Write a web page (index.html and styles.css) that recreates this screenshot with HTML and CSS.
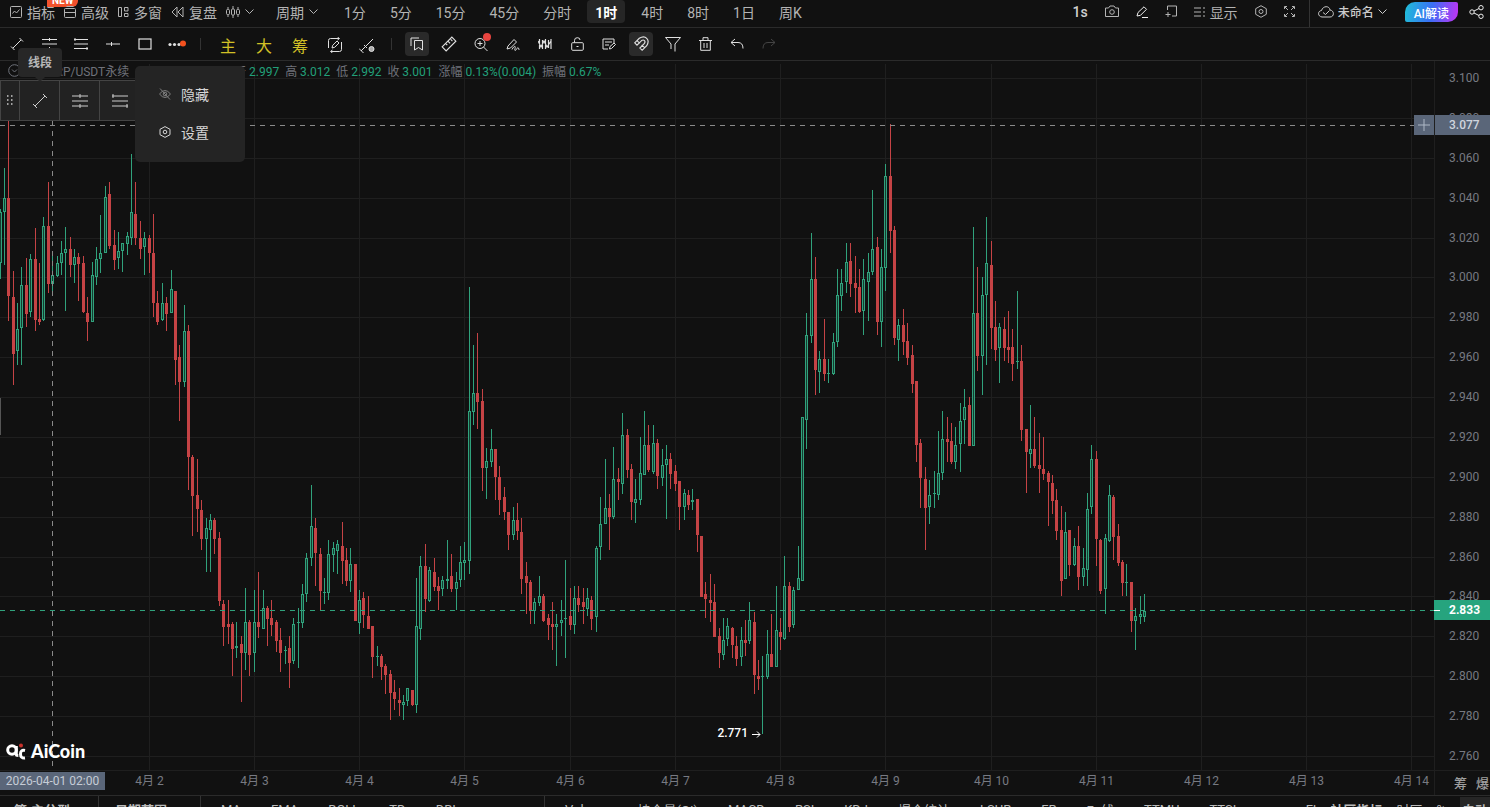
FILE: index.html
```
<!DOCTYPE html>
<html lang="zh-CN">
<head>
    <meta charset="UTF-8">
    <title>AiCoin - XRP/USDT永续</title>
    <meta name="viewport" content="width=device-width, initial-scale=1">
    <link rel="stylesheet" href="styles.css">
</head>
<body>
    <header class="topbar">
        <div class="tools">
            <button class="tool">
                <svg width="12" height="12" viewBox="0 0 12 12"><rect x=".5" y=".5" width="11" height="11" rx="1"/><path d="M2.5 7.5l2-2.500 2 2 3-3.500"/></svg>指标
                <span class="badge">NEW</span>
            </button>
            <button class="tool"><svg width="12" height="12" viewBox="0 0 12 12"><rect x=".5" y="2.500" width="11" height="9" rx="1"/><path d="M2.500 .5h7M.5 6.500h11"/></svg>高级</button>
            <button class="tool"><svg width="11" height="12" viewBox="0 0 11 12"><path d="M.5 1.500h3v9h-3zM6.500 1.500h3.500v3.500h-3.500zM6.500 7.500h3.500v3h-3.500z"/></svg>多窗</button>
            <button class="tool"><svg width="13" height="12" viewBox="0 0 13 12"><path d="M6 1v10L1 6zM12 1v10L7 6z"/></svg>复盘</button>
            <button class="tool" aria-label="K线类型">
                <svg width="14" height="14" viewBox="0 0 14 14"><path d="M2 2v10M7 1v12M12 2v10"/><rect x=".5" y="4.500" width="3" height="5" rx="1" fill="#111"/><rect x="5.500" y="4" width="3" height="6" rx="1" fill="#111"/><rect x="10.500" y="4.500" width="3" height="5" rx="1" fill="#111"/></svg>
                <svg width="9" height="6" viewBox="0 0 9 6"><path d="M.5 .5l4 4 4-4"/></svg>
            </button>
        </div>
        <nav class="periods">
            <button class="tool period-menu">周期<svg width="9" height="6" viewBox="0 0 9 6"><path d="M.5 .5l4 4 4-4"/></svg></button>
            <button>1分</button>
            <button>5分</button>
            <button>15分</button>
            <button>45分</button>
            <button>分时</button>
            <button class="active">1时</button>
            <button>4时</button>
            <button>8时</button>
            <button>1日</button>
            <button>周K</button>
        </nav>
        <div class="actions">
            <button class="speed">1s</button>
            <button aria-label="截图"><svg width="14" height="13" viewBox="0 0 14 13"><path d="M.5 3h3l1.500-2h4l1.500 2h3v8.500h-13z"/><circle cx="7" cy="7" r="2.300"/></svg></button>
            <button class="bright" aria-label="画笔"><svg width="12" height="12" viewBox="0 0 12 12"><path d="M1 10l1-3.500L8 .8l2.500 2.500-6 6L1 10zM6 11.500h6"/></svg></button>
            <button aria-label="添加窗口"><svg width="12" height="13" viewBox="0 0 12 13"><path d="M2.500 5V1h9v10H7M3 7v5M.5 9.500h5"/></svg></button>
            <button class="tool"><svg width="11" height="10" viewBox="0 0 11 10"><path d="M0 1h7M0 5h7M0 9h7M9 1h2M9 5h2M9 9h2"/></svg>显示</button>
            <button aria-label="设置"><svg width="12" height="13" viewBox="0 0 12 13"><path d="M6 .7l5.300 3v5.600L6 12.300.7 9.300V3.700z"/><circle cx="6" cy="6.500" r="2"/></svg></button>
            <button aria-label="全屏"><svg width="11" height="11" viewBox="0 0 11 11"><path d="M.5 3V.5H3M1 1l3 3M8 .5h2.500V3M10 1L7 4M.5 8v2.500H3M1 10l3-3M8 10.500h2.500V8M10 10L7 7"/></svg></button>
        </div>
        <div class="account">
            <button class="tool layout-name">
                <svg width="16" height="12" viewBox="0 0 16 12"><path d="M4 11C-.5 10.500-.5 5 3.500 4.500 5-.5 11.500-.5 12 4c4.500.5 4.500 7 0 7zM5 6.500l2.500 2 4-4"/></svg>未命名
                <svg width="9" height="6" viewBox="0 0 9 6"><path d="M.5 .5l4 4 4-4"/></svg>
            </button>
            <button class="ai">AI解读</button>
            <button class="bright" aria-label="分享"><svg width="15" height="14" viewBox="0 0 15 14"><circle cx="3" cy="7" r="2.200"/><circle cx="12" cy="2.700" r="2.200"/><circle cx="12" cy="11.300" r="2.200"/><path d="M5 6l5-2.500M5 8l5 2.500"/></svg></button>
        </div>
    </header>

    <div class="drawbar">
        <button aria-label="线段"><svg width="14" height="14" viewBox="0 0 14 14"><path d="M3 11l8-8M1 9.500l3.500 3.500M9.500 1L13 4.500"/></svg></button>
        <button aria-label="平行线"><svg width="15" height="12" viewBox="0 0 15 12"><path d="M0 1.500h15M0 6h15M0 10.500h15M7.500 0v3M7.500 9v3"/></svg></button>
        <button aria-label="通道"><svg width="14" height="12" viewBox="0 0 14 12"><path d="M0 1.500h14M0 6h14M0 10.500h14M1 0v3M13 9v3"/></svg></button>
        <button aria-label="水平线"><svg width="14" height="6" viewBox="0 0 14 6"><path d="M0 3h14M5.500 1v4"/></svg></button>
        <button aria-label="矩形"><svg width="14" height="12" viewBox="0 0 14 12"><rect x="1" y="1" width="12" height="10" stroke-width="1.200"/></svg></button>
        <button aria-label="更多"><svg width="18" height="8" viewBox="0 0 18 8"><g fill="currentColor" stroke="none"><circle cx="2" cy="4.500" r="1.600"/><circle cx="6.500" cy="4.500" r="1.600"/><circle cx="11" cy="4.500" r="1.600"/></g><circle cx="15" cy="3.500" r="3" fill="#f4511e" stroke="none"/></svg></button>
        <i class="sep"></i>
        <button class="gold">主</button>
        <button class="gold">大</button>
        <button class="gold">筹</button>
        <button class="mid" aria-label="循环绘图"><svg width="16" height="16" viewBox="0 0 16 16"><path d="M1.500 11V3.500q0-2 2-2H12M10.500 0l2 1.500-2 1.500M14.500 5v7.500q0 2-2 2H4M5.500 13l-2 1.500 2 1.500M5 11l.7-2.700L10 4l2 2-4.300 4.300z"/></svg></button>
        <button class="mid" aria-label="线段设置"><svg width="17" height="16" viewBox="0 0 17 16"><path d="M2 14L14 2M0 11.500L4.500 16M5 8l3 3"/><circle cx="12.500" cy="12" r="2.500" fill="#aaa"/></svg></button>
        <i class="sep"></i>
        <button class="on" aria-label="收藏"><svg width="14" height="14" viewBox="0 0 14 14"><path d="M1 9V1h8M4.500 3.500h8V13l-4-2.500-4 2.500z"/></svg></button>
        <button aria-label="测量"><svg width="16" height="16" viewBox="0 0 14 14"><path d="M1 9.500L9.500 1 13 4.500 4.500 13zM4 6.500l1.500 1.500M6 4.500L8 6.500M8.500 3L10 4.500"/></svg></button>
        <button aria-label="放大" class="dot"><svg width="14" height="14" viewBox="0 0 14 14"><circle cx="6" cy="6.500" r="5"/><path d="M9.500 10l4 4M3.500 6.500h5M6 4v5"/></svg></button>
        <button aria-label="涂画"><svg width="14" height="13" viewBox="0 0 14 13"><path d="M1 11l1-3 6-6.500 2.500 2.500-6 6zM6 11.500c2-4 4-4 3-1s1 2 2 0 2 0 2 1.500"/></svg></button>
        <button aria-label="形态"><svg width="14" height="12" viewBox="0 0 14 12"><path d="M1.500 1v10M4.500 2v9M7.500 1v10M10.500 2v8M13 1v10M0 3l3 6 3-6 3 6 4-6" stroke-width="1.200"/></svg></button>
        <button aria-label="锁定"><svg width="13" height="14" viewBox="0 0 13 14"><rect x=".7" y="5.700" width="11.600" height="7.600" rx="1"/><path d="M3.500 5.500V3.500q0-2.800 2.800-2.800T9 3M5.500 9.500h2"/></svg></button>
        <button aria-label="笔记"><svg width="14" height="12" viewBox="0 0 14 12"><path d="M6 11H1V1h11v4M3 4h7M3 7h4M7.500 11l.5-2.500L12 5l1.500 1.500-4 4z"/></svg></button>
        <button class="on" aria-label="磁吸"><svg width="16" height="16" viewBox="0 0 14 14"><path d="M1.500 6l4-4q4-2.500 6.500 0t0 6.500l-4 4L6 10.500l4-4q1-1.500 0-2.500t-2.500 0l-4 4zM3.500 4L6 6.500M10 10L7.500 8"/></svg></button>
        <button aria-label="筛选"><svg width="16" height="16" viewBox="0 0 16 16"><path d="M.5 1.500h15L10 8v7.500M6 13V8L.5 1.500"/></svg></button>
        <button aria-label="删除"><svg width="13" height="14" viewBox="0 0 13 14"><path d="M0 3.500h13M4 3V.7h5V3M1.700 3.500v9.800h9.600V3.500M5 6v5M8 6v5"/></svg></button>
        <button aria-label="撤销"><svg width="14" height="12" viewBox="0 0 14 12"><path d="M5 1L1 4.500 5 8M1 4.500h7q5 0 5 6"/></svg></button>
        <button class="off" aria-label="重做"><svg width="14" height="12" viewBox="0 0 14 12"><path d="M9 1l4 3.500L9 8M13 4.500H6q-5 0-5 6"/></svg></button>
    </div>

    <main class="chart">
        <div class="plot">
            <svg id="candles" class="canvas"></svg>
            <div class="ohlc">
                <svg width="13" height="13" viewBox="0 0 13 13"><circle cx="6.500" cy="6.500" r="5.800"/><path d="M4 5.500L6.500 8 9 5.500"/></svg>
                <span class="symbol">XRP/USDT永续</span>
                <span class="values">
                    <span>开 <b>2.997</b></span>
                    <span>高 <b>3.012</b></span>
                    <span>低 <b>2.992</b></span>
                    <span>收 <b>3.001</b></span>
                    <span>涨幅 <b>0.13%(0.004)</b></span>
                    <span>振幅 <b>0.67%</b></span>
                </span>
            </div>
            <div class="floatbar">
                <span class="grip"><svg width="6" height="11" viewBox="0 0 6 11"><path d="M0 1h1.500M4 1h1.500M0 5h1.500M4 5h1.500M0 9h1.500M4 9h1.500" stroke-width="1.500"/></svg></span>
                <button aria-label="线段"><svg width="16" height="16" viewBox="0 0 16 16"><path d="M3 13L13 3M1 11l4 4M11 1l4 4"/></svg></button>
                <button aria-label="平行线"><svg width="16" height="16" viewBox="0 0 16 16"><path d="M0 3h16M0 8h16M0 13h16M8 1v4M8 11v4"/></svg></button>
                <button aria-label="通道"><svg width="16" height="16" viewBox="0 0 16 16"><path d="M0 3h16M0 8h16M0 13h16M1 1v4M15 11v4"/></svg></button>
            </div>
            <div class="tooltip">线段</div>
            <div class="menu">
                <button><svg width="12" height="12" viewBox="0 0 12 12" opacity=".5"><path d="M.5 6Q6-1 11.500 6 6 13 .5 6zM1 .5l10 11"/><circle cx="6" cy="6" r="1.800"/></svg>隐藏</button>
                <button><svg width="12" height="12" viewBox="0 0 12 12"><path d="M6 .6l5 2.700v5.400l-5 2.700-5-2.700V3.300z"/><circle cx="6" cy="6" r="1.800"/></svg>设置</button>
            </div>
            <i class="handle"></i>
            <div class="logo">
                <svg width="21" height="17" viewBox="0 0 21 17"><circle cx="6" cy="7" r="4.300" stroke="#fff" stroke-width="3"/><path d="M10.300 3v8.500q0 1 2 1M19 7.500q-4.500-1-4.500 3.500t4.500 4" stroke="#fff" stroke-width="3"/><circle cx="15" cy="2.500" r="2" fill="#c8312b" stroke="none"/></svg>
                AiCoin
            </div>
            <div class="time-tag">2026-04-01 02:00</div>
            <button class="add" aria-label="添加"><svg width="12" height="12" viewBox="0 0 12 12"><path d="M6 0v12M0 6h12"/></svg></button>
        </div>
        <aside class="prices">
            <div class="scale">
                <span>3.100</span><span>3.080</span><span>3.060</span><span>3.040</span><span>3.020</span><span>3.000</span>
                <span>2.980</span><span>2.960</span><span>2.940</span><span>2.920</span><span>2.900</span><span>2.880</span>
                <span>2.860</span><span>2.840</span><span>2.820</span><span>2.800</span><span>2.780</span><span>2.760</span>
            </div>
            <div class="corner"><button>筹</button><button>爆</button></div>
            <div class="tag cursor">3.077</div>
            <div class="tag last">2.833</div>
        </aside>
    </main>

    <footer class="indicators">
        <div class="group first"><button>筹·主分型</button></div>
        <div class="group second"><button>日期范围</button></div>
        <div class="group main">
            <button>MA</button><button>EMA</button><button>BOLL</button><button>TD</button><button>DBI</button>
        </div>
        <div class="group sub">
            <button>Vol</button><button class="wide">持仓量(OI)</button><button>MACD</button><button>RSI</button><button>KDJ</button><button>爆仓统计</button><button>LSUR</button><button>FR</button><button>Fr 线</button><button>TTMU</button><button>TTSI</button>
        </div>
        <div class="group last"><button>FI</button><button class="strong">社区指标</button><button>时区</button><button>%</button><button class="auto">自动</button></div>
    </footer>

    <script src="chart.js"></script>
</body>
</html>
```
FILE: styles.css
```
* { box-sizing: border-box; }
body {
    margin: 0;
    background: #111;
    color: #b4b4b4;
    font-family: Roboto, "Noto Sans CJK SC", sans-serif;
    font-size: 14px;
    overflow: hidden;
}
button {
    display: inline-flex;
    align-items: center;
    justify-content: center;
    padding: 0;
    border: 0;
    background: none;
    color: inherit;
    font: inherit;
    white-space: nowrap;
}
svg { fill: none; stroke: currentColor; flex: none; }

/* top bar */
.topbar { display: flex; align-items: flex-start; height: 28px; padding-left: 10px; border-bottom: 1px solid #2b2b2b; }
.topbar button { height: 23px; }
.tools { display: flex; gap: 9px; }
.tool { position: relative; gap: 5px; }
.badge {
    position: absolute;
    top: -7px;
    left: 37px;
    height: 14px;
    padding: 0 5px;
    border-radius: 4px 4px 6px 0;
    background: #f2512c;
    color: #fff;
    font-size: 10px;
    font-weight: 700;
    line-height: 16px;
}
.periods { display: flex; gap: 8px; margin-left: 22px; }
.periods .period-menu { margin-right: 10px; padding: 0; }
.periods button { padding: 0 8px; border-radius: 4px; }
.periods .active { background: #262626; color: #fff; font-weight: 700; }
.actions { display: flex; gap: 17px; margin-left: auto; padding-right: 14px; }
.speed { font-weight: 500; color: #d0d0d0; }
.bright { color: #eee; }
.account { display: flex; height: 27px; padding: 0 6px 0 8px; border-left: 1px solid #333; }
.layout-name { gap: 4px; color: #ccc; font-size: 12px; font-weight: 500; }
.topbar .ai {
    height: 20px;
    margin: 2px 11px 0 18px;
    padding: 0 9px;
    border-radius: 10px 2px 10px 2px;
    background: linear-gradient(100deg, #1fc0d8, #3a6ef5 50%, #c432f5);
    color: #fff;
    font-size: 12px;
    font-weight: 500;
}

/* drawing tools */
.drawbar { display: flex; align-items: center; height: 33px; padding-left: 1px; border-bottom: 1px solid #2b2b2b; color: #e0e0e0; }
.drawbar button { position: relative; width: 32px; height: 24px; }
.drawbar .gold { width: 36px; padding-top: 2px; color: #d2c026; font-size: 16px; }
.drawbar .mid { width: 33px; padding-top: 2px; }
.drawbar .on { width: 24px; margin: 0 4px; border-radius: 4px; background: #2a2a2a; }
.drawbar .off { color: #444; }
.drawbar .dot::after { content: ""; position: absolute; top: 1px; right: 6px; width: 8px; height: 8px; border-radius: 50%; background: #e8443f; }
.sep { width: 1px; height: 12px; margin: 0 9px 0 7px; background: #333; }

/* chart */
.chart { display: flex; height: 735px; border-bottom: 1px solid #2b2b2b; }
.plot { position: relative; flex: 1; min-width: 0; }
.canvas { display: block; width: 100%; height: 100%; }
.grid { stroke: #1f1f1f; }
.up { fill: #30a27c; stroke: none; }
.hollow { fill: #153c30; stroke: none; }
.down { fill: #c54345; stroke: none; }
.cross { stroke: #8a8a8a; stroke-dasharray: 5 5; }
.current { stroke: #30a27c; stroke-dasharray: 5 5; }
.date { fill: #777a82; stroke: none; font-size: 12px; text-anchor: middle; }
.low { fill: #fff; stroke: none; font-size: 12px; font-weight: 500; text-anchor: end; }
.arrow { stroke: #fff; }
.ohlc {
    position: absolute;
    top: 0;
    left: 8px;
    display: flex;
    align-items: center;
    height: 18px;
    color: #6f727a;
    font-size: 12px;
    white-space: nowrap;
}
.symbol { width: 186px; padding-left: 27px; }
.values { display: flex; gap: 6px; margin-left: 27px; }
.values b { color: #22a07a; font-weight: 400; }
.floatbar {
    position: absolute;
    top: 19px;
    left: 0;
    display: flex;
    height: 41px;
    border: 1px solid #444;
    background: #222;
    color: #ccc;
}
.floatbar button { width: 40px; border-left: 1px solid #444; }
.grip { display: flex; align-items: center; justify-content: center; width: 18px; }
.tooltip {
    position: absolute;
    top: -13px;
    left: 18px;
    width: 44px;
    height: 29px;
    border-radius: 4px;
    background: #272727;
    color: #b8b8b8;
    font-size: 12px;
    font-weight: 700;
    line-height: 31px;
    text-align: center;
}
.tooltip::after { content: ""; position: absolute; top: 29px; left: 17px; border: 5px solid transparent; border-top-color: #272727; }
.menu {
    position: absolute;
    top: 5px;
    left: 135px;
    width: 110px;
    height: 96px;
    padding: 9px 0;
    border-radius: 5px;
    background: #242424;
    color: #d6d6d6;
}
.menu button { justify-content: flex-start; gap: 10px; width: 100%; height: 38px; padding-left: 24px; }
.handle { position: absolute; top: 337px; left: 0; width: 1px; height: 37px; background: #555; }
.logo {
    position: absolute;
    bottom: 34px;
    left: 6px;
    display: flex;
    align-items: center;
    gap: 4px;
    color: #fff;
    font-family: Lato, sans-serif;
    font-size: 18px;
    font-weight: 900;
    line-height: 20px;
}
.time-tag {
    position: absolute;
    bottom: 5px;
    left: 0;
    width: 105px;
    height: 18px;
    background: #5a6679;
    color: #c6ccd6;
    font-size: 12px;
    line-height: 18px;
    text-align: center;
}
.add { position: absolute; top: 54px; right: 0; width: 20px; height: 20px; background: #5a6679; color: #aeb8c6; }
.prices { position: relative; width: 56px; border-left: 1px solid #1f1f1f; }
.scale {
    display: flex;
    flex-direction: column;
    justify-content: space-between;
    height: 710px;
    padding: 9px 0 6px 14px;
    border-bottom: 1px solid #1f1f1f;
    color: #777a82;
    font-size: 12px;
    line-height: 16px;
}
.corner { display: flex; gap: 9px; height: 22px; padding-left: 19px; overflow: hidden; color: #a0a0a0; font-size: 13px; font-weight: 500; }
.tag { position: absolute; left: 0; width: 55px; height: 20px; padding-left: 14px; font-size: 12px; font-weight: 500; line-height: 20px; }
.cursor { top: 54px; background: #5a6679; color: #d0d5de; }
.last.tag { top: 539px; left: -1px; width: 56px; padding-left: 15px; background: #26a47e; color: #fff; font-weight: 700; }
.last.tag::before { content: ""; position: absolute; top: 10px; left: 0; width: 6px; height: 1px; background: #fff; }

/* indicator tabs */
.indicators { display: flex; height: 26px; color: #bbb; font-size: 13px; }
.group { display: flex; flex: none; align-items: center; gap: 30px; padding-left: 20px; border-right: 1px solid #333; }
.first { width: 99px; padding-left: 14px; font-weight: 700; }
.second { width: 102px; padding-left: 16px; font-weight: 700; }
.main { width: 344px; }
.sub { flex: 1; border: 0; }
.wide { padding: 0 0 0 24px; }
.indicators .last { gap: 14px; padding-left: 10px; border: 0; }
.strong { font-weight: 700; }
.auto { height: 24px; padding: 0 2px; background: #262626; font-weight: 700; }
```
FILE: chart.js
```
// each bar: up(1)/down(0), high, body top, body bottom, low
const bars = [
    [1,209,212,263,279],[1,168,198,212,265],[0,121,198,296,321],[0,271,297,354,385],[1,303,329,351,365],[1,267,285,328,365],
    [0,258,285,314,327],[1,254,259,312,317],[0,228,259,320,331],[0,263,319,322,325],[1,217,226,320,321],[0,182,226,284,293],
    [1,253,275,284,296],[1,256,263,276,277],[1,241,253,263,275],[1,227,249,253,311],[0,237,249,265,277],[1,249,257,265,283],
    [0,253,257,264,301],[0,256,263,312,313],[0,297,313,322,341],[1,262,275,322,322],[1,247,259,277,285],[1,215,253,259,273],
    [1,186,197,253,253],[0,182,194,246,249],[0,230,245,260,270],[1,232,251,258,269],[1,243,243,251,272],[1,232,236,244,255],
    [1,154,212,238,245],[0,182,214,238,245],[0,221,238,249,259],[1,232,238,247,275],[0,235,238,253,273],[0,214,253,303,317],
    [0,291,303,322,325],[1,283,303,320,321],[0,297,303,314,331],[1,270,289,313,313],[0,291,291,360,385],[0,345,357,382,421],
    [1,305,331,382,387],[0,325,331,457,490],[0,455,457,496,536],[0,459,495,509,532],[0,500,510,539,550],[1,518,528,539,572],
    [1,514,520,530,572],[0,518,520,539,554],[0,532,538,601,606],[0,600,604,627,646],[0,600,624,627,644],[0,622,624,649,676],
    [1,622,646,648,658],[0,636,644,653,702],[1,588,622,653,670],[0,620,622,655,676],[1,590,622,653,672],[0,572,622,627,638],
    [1,590,608,629,629],[0,606,608,619,646],[0,600,618,625,636],[0,620,622,641,652],[0,628,640,653,672],[1,646,650,651,664],
    [0,636,648,663,688],[1,618,624,661,664],[1,608,622,623,668],[1,584,594,623,628],[1,553,558,594,602],[1,485,526,558,566],
    [0,518,528,553,586],[0,548,554,591,610],[1,578,592,593,604],[1,540,554,593,600],[1,542,548,555,572],[1,540,544,551,574],
    [0,522,546,561,584],[0,548,560,581,586],[1,548,564,581,592],[0,564,564,621,621],[1,590,600,623,634],[0,592,598,615,628],
    [0,596,616,629,629],[0,626,626,657,678],[1,646,656,657,666],[0,654,656,667,680],[0,664,666,675,694],[0,670,674,693,720],
    [0,680,692,699,710],[0,688,700,703,716],[1,695,702,705,720],[1,688,688,701,706],[0,690,690,705,706],[1,578,626,705,713],
    [1,556,566,629,640],[0,544,566,599,612],[1,567,570,601,602],[0,558,572,587,591],[0,577,586,591,610],[1,576,580,589,596],
    [1,540,579,581,589],[0,554,576,589,592],[1,572,582,589,610],[1,546,562,580,587],[1,542,560,563,580],[1,287,411,561,574],
    [1,345,393,412,425],[0,333,393,402,429],[0,389,401,468,491],[1,448,461,468,499],[1,429,449,462,467],[0,449,449,477,500],
    [0,466,477,500,515],[0,487,497,512,520],[0,512,512,535,550],[1,507,520,535,540],[0,503,520,531,540],[0,518,532,579,594],
    [0,562,576,583,614],[0,580,582,611,624],[1,598,602,611,624],[1,576,596,603,606],[0,594,596,621,622],[0,614,618,625,640],
    [0,602,624,627,650],[1,614,624,627,666],[1,600,620,623,636],[1,560,618,619,658],[0,588,616,625,630],[1,586,598,625,634],
    [0,586,598,605,612],[0,588,602,607,624],[1,588,598,609,616],[0,596,600,619,630],[1,546,548,617,632],[1,497,524,547,560],
    [1,459,508,524,524],[0,494,508,517,550],[1,447,479,517,519],[0,468,479,482,500],[1,413,435,484,494],[0,429,435,470,478],
    [0,464,469,502,520],[1,479,499,503,523],[1,437,473,500,505],[1,411,445,475,475],[0,425,445,470,472],[1,425,443,472,474],
    [0,439,443,476,489],[1,449,465,478,486],[1,445,459,465,519],[0,453,459,474,489],[0,465,471,484,491],[0,481,481,507,530],
    [1,489,493,507,520],[0,490,495,505,510],[1,489,500,502,510],[0,499,499,535,552],[0,536,536,597,597],[0,582,594,599,618],
    [0,574,600,603,622],[0,584,602,637,637],[0,628,636,653,668],[1,618,640,655,660],[1,618,626,639,646],[0,627,628,645,658],
    [0,636,646,659,666],[1,627,640,657,666],[0,620,640,643,656],[1,602,620,641,644],[0,612,622,675,694],[0,660,676,679,690],
    [1,656,676,677,734],[1,630,654,677,679],[0,614,654,667,667],[1,586,630,667,667],[0,618,632,637,650],[1,556,586,639,640],
    [0,582,586,627,632],[1,587,590,625,628],[1,546,578,590,590],[1,417,417,581,581],[1,313,335,420,449],[1,233,279,336,343],
    [0,257,279,370,395],[1,351,359,372,393],[0,319,359,374,381],[1,359,373,374,383],[1,333,342,374,375],[1,269,295,342,347],
    [1,269,283,296,311],[1,243,262,282,293],[0,243,261,284,297],[0,256,283,288,313],[0,269,287,312,313],[1,259,279,311,335],
    [1,253,272,282,321],[1,190,249,272,275],[0,237,247,322,335],[1,249,267,322,347],[1,164,176,268,291],[0,124,176,231,253],
    [0,226,230,338,345],[1,319,325,340,361],[0,309,325,342,355],[0,323,341,358,365],[0,345,355,384,393],[0,381,381,445,462],
    [0,439,443,478,508],[0,467,479,508,550],[1,480,495,507,524],[1,471,493,494,508],[1,431,473,495,500],[1,411,439,473,480],
    [0,417,439,442,462],[0,423,441,462,464],[1,427,445,462,469],[1,403,421,444,472],[1,389,407,420,444],[0,397,405,446,446],
    [1,227,313,446,446],[0,267,313,356,371],[1,277,295,356,395],[1,217,263,295,365],[0,241,265,328,349],[0,301,327,350,361],
    [1,323,327,348,383],[0,317,329,348,361],[0,311,347,350,363],[0,329,347,364,381],[1,291,361,362,369],[0,345,361,430,441],
    [0,429,429,452,493],[1,405,449,454,468],[0,417,449,466,468],[0,433,465,469,493],[0,437,469,474,480],[0,471,473,482,526],
    [0,475,483,501,514],[0,489,500,531,540],[0,506,530,581,596],[1,512,532,579,579],[0,530,530,565,576],[1,538,546,565,566],
    [0,526,546,577,590],[1,548,568,577,586],[1,493,509,570,586],[1,445,459,507,514],[0,451,459,539,566],[0,539,540,591,594],
    [1,534,538,589,614],[1,485,495,541,542],[0,495,497,537,560],[0,524,536,563,566],[0,560,562,583,596],[1,564,582,583,596],
    [0,582,582,621,632],[1,608,616,621,650],[1,596,614,617,624],[1,594,611,617,622]
];

const TOP = 61;        // bars are measured from the window top
const STEP = 4.385;    // distance between two bars
const BOTTOM = 709;
const svg = document.getElementById('candles');

function add(name, attrs, text) {
    const el = document.createElementNS('http://www.w3.org/2000/svg', name);
    for (const key in attrs) el.setAttribute(key, attrs[key]);
    if (text) el.textContent = text;
    svg.appendChild(el);
}

function line(cls, x1, y1, x2, y2) {
    add('line', { class: cls, x1, y1, x2, y2 });
}

// grid and dates
for (let i = 0; i < 18; i++) {
    const y = Math.round(17 + i * 39.88) + 0.5;
    line('grid', 0, y, '100%', y);
}
for (let day = 0; day < 13; day++) {
    const x = Math.floor(STEP * (34 + day * 24)) + 0.5;
    line('grid', x, 3, x, BOTTOM);
    add('text', { class: 'date', x, y: 724 }, '4月 ' + (day + 2));
}
line('grid', 0, BOTTOM + 0.5, '100%', BOTTOM + 0.5);

// candles
bars.forEach(([up, high, top, bottom, low], i) => {
    const x = Math.floor(i * STEP);
    const cls = up ? 'up' : 'down';
    const height = Math.max(bottom - top, 1);
    add('rect', { class: cls, x, y: high - TOP, width: 1, height: Math.max(low - high, 1) });
    add('rect', { class: cls, x: x - 1, y: top - TOP, width: 3, height });
    if (up && height > 2) {
        add('rect', { class: 'hollow', x, y: top - TOP + 1, width: 1, height: height - 2 });
    }
});

// crosshair, last price, lowest price
line('cross', 0, 64.5, '100%', 64.5);
line('cross', 52.5, 60, 52.5, BOTTOM);
line('current', 0, 549.5, '100%', 549.5);
add('text', { class: 'low', x: 748, y: 676 }, '2.771');
add('path', { class: 'arrow', d: 'M752 673.500h8M757 670.500l3 3-3 3' });
```
